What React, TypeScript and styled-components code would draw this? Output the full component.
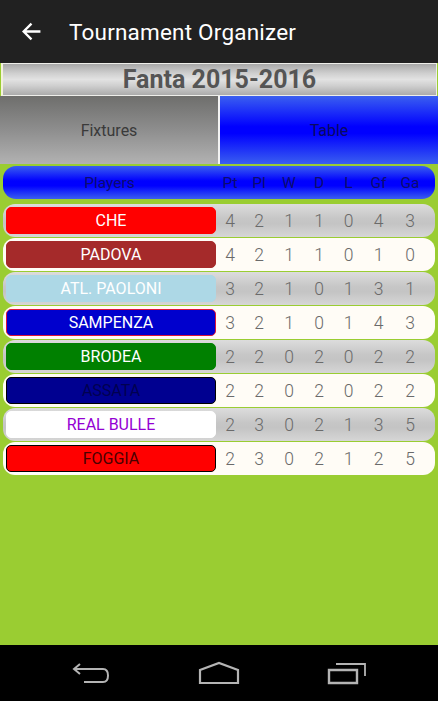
import React from 'react';
import styled, { createGlobalStyle } from 'styled-components';

const Global = createGlobalStyle`
  html, body { margin: 0; padding: 0; background: #9acd32; }
  body { font-family: Roboto, "Noto Sans", Arial, sans-serif; }
`;

const Screen = styled.div`
  width: 438px;
  height: 701px;
  display: flex;
  flex-direction: column;
  background: #9acd32;
  overflow: hidden;
`;

const ActionBar = styled.div`
  height: 63px;
  flex: none;
  background: #212121;
  display: flex;
  align-items: center;
  padding-left: 21px;
  gap: 27px;
  color: #fff;
`;

const Title = styled.div`
  font-size: 22.5px;
  letter-spacing: 0.2px;
`;

const Banner = styled.div`
  height: 33px;
  flex: none;
  margin: 0 1px 0 1px;
  border: 1px solid #eeeeea;
  border-left: 2px solid #f4f2dc;
  background: linear-gradient(#a8a8a8 0%, #cfcfcf 30%, #e2e2e2 50%, #cfcfcf 70%, #ababab 100%);
  display: flex;
  align-items: center;
  justify-content: center;
  font-size: 25px;
  font-weight: bold;
  color: #555;
  box-sizing: border-box;
`;

const Tabs = styled.div`
  height: 68px;
  flex: none;
  display: grid;
  grid-template-columns: 218px 220px;
`;

const Tab = styled.div<{ $active?: boolean }>`
  display: flex;
  align-items: center;
  justify-content: center;
  font-size: 16px;
  color: ${(p) => (p.$active ? '#0a0a60' : '#3a3a3a')};
  background: ${(p) =>
    p.$active
      ? 'linear-gradient(#3a5ff0 0%, #0000ff 45%, #0000ff 55%, #3a5ff0 100%)'
      : 'linear-gradient(#6e6e6c 0%, #8e8e8e 50%, #b2b2b2 100%)'};
  border-left: ${(p) => (p.$active ? '2px solid #f2f2f2' : 'none')};
`;

const Board = styled.div`
  flex: 1;
  display: flex;
  flex-direction: column;
  padding: 2px 3px 0 3px;
  gap: 1px;
`;

const Cols = `
  display: grid;
  grid-template-columns: 213px 28px 30px 30px 30px 29px 31px 32px 1fr;
  align-items: center;
`;

const HeadRow = styled.div`
  ${Cols}
  height: 33px;
  border-radius: 13px;
  background: linear-gradient(#3a5ff0 0%, #0000ff 45%, #0000ff 60%, #3a5ff0 100%);
  color: #0c0c70;
  font-size: 15.5px;
  margin-bottom: 4px;
  & > span { text-align: center; }
`;

const Row = styled.div<{ $odd: boolean }>`
  ${Cols}
  height: 33px;
  border-radius: 12px;
  background: ${(p) =>
    p.$odd
      ? 'linear-gradient(#dcdcdc 0%, #c6c6c6 45%, #c4c4c4 60%, #d6d6d6 100%)'
      : '#fffcf6'};
  color: #6a6a6a;
  font-size: 17.5px;
  font-weight: 300;
  & > span { text-align: center; }
`;

const NamePill = styled.div<{ $bg: string; $fg: string; $edge: string }>`
  margin-left: 3px;
  height: 27px;
  box-sizing: border-box;
  border-radius: 5px;
  background: ${(p) => p.$bg};
  border: 1.5px solid ${(p) => p.$edge};
  color: ${(p) => p.$fg};
  display: flex;
  align-items: center;
  justify-content: center;
  font-size: 16px;
  font-weight: 400;
`;

const NavBar = styled.div`
  height: 56px;
  flex: none;
  background: #000;
  display: flex;
  align-items: center;
  padding-left: 71px;
  gap: 87px;
`;

type Team = {
  name: string;
  bg: string;
  fg: string;
  edge: string;
  stats: number[];
};

const teams: Team[] = [
  { name: 'CHE', bg: '#ff0000', fg: '#ffffff', edge: '#ff0000', stats: [4, 2, 1, 1, 0, 4, 3] },
  { name: 'PADOVA', bg: '#a52a2a', fg: '#ffffff', edge: '#a52a2a', stats: [4, 2, 1, 1, 0, 1, 0] },
  { name: 'ATL. PAOLONI', bg: '#add8e6', fg: '#ffffff', edge: '#add8e6', stats: [3, 2, 1, 0, 1, 3, 1] },
  { name: 'SAMPENZA', bg: '#0000cd', fg: '#ffffff', edge: '#dc143c', stats: [3, 2, 1, 0, 1, 4, 3] },
  { name: 'BRODEA', bg: '#008000', fg: '#ffffff', edge: '#008000', stats: [2, 2, 0, 2, 0, 2, 2] },
  { name: 'ASSATA', bg: '#000090', fg: '#000050', edge: '#000000', stats: [2, 2, 0, 2, 0, 2, 2] },
  { name: 'REAL BULLE', bg: '#ffffff', fg: '#9400d3', edge: '#ffffff', stats: [2, 3, 0, 2, 1, 3, 5] },
  { name: 'FOGGIA', bg: '#ff0000', fg: '#4a0000', edge: '#000000', stats: [2, 3, 0, 2, 1, 2, 5] },
];

const columns = ['Pt', 'Pl', 'W', 'D', 'L', 'Gf', 'Ga'];

export default function App() {
  return (
    <Screen>
      <Global />
      <ActionBar>
        <svg width="21" height="21" viewBox="0 0 20 20">
          <path d="M18.5 10H3M10 2.5L2.5 10L10 17.5" stroke="#fff" strokeWidth="2.2" fill="none" />
        </svg>
        <Title>Tournament Organizer</Title>
      </ActionBar>
      <Banner>Fanta 2015-2016</Banner>
      <Tabs>
        <Tab>Fixtures</Tab>
        <Tab $active>Table</Tab>
      </Tabs>
      <Board>
        <HeadRow>
          <span>Players</span>
          {columns.map((c) => (
            <span key={c}>{c}</span>
          ))}
        </HeadRow>
        {teams.map((t, i) => (
          <Row key={t.name} $odd={i % 2 === 0}>
            <NamePill $bg={t.bg} $fg={t.fg} $edge={t.edge}>
              {t.name}
            </NamePill>
            {t.stats.map((s, j) => (
              <span key={j}>{s}</span>
            ))}
          </Row>
        ))}
      </Board>
      <NavBar>
        <svg width="40" height="24" viewBox="0 0 40 24">
          <path d="M9 3L3 8L9 13M3 8H32Q37 8 37 14.5Q37 21 32 21H13" stroke="#b4b4b4" strokeWidth="2" fill="none" />
        </svg>
        <svg width="42" height="24" viewBox="0 0 42 24">
          <path d="M2 22V9L21 2L40 9V22Z" stroke="#b4b4b4" strokeWidth="2.2" fill="none" />
        </svg>
        <svg width="40" height="24" viewBox="0 0 40 24">
          <path d="M2 9H30V22H2Z" stroke="#b4b4b4" strokeWidth="2.4" fill="none" />
          <path d="M9 3H38V15" stroke="#b4b4b4" strokeWidth="1.8" fill="none" />
        </svg>
      </NavBar>
    </Screen>
  );
}
